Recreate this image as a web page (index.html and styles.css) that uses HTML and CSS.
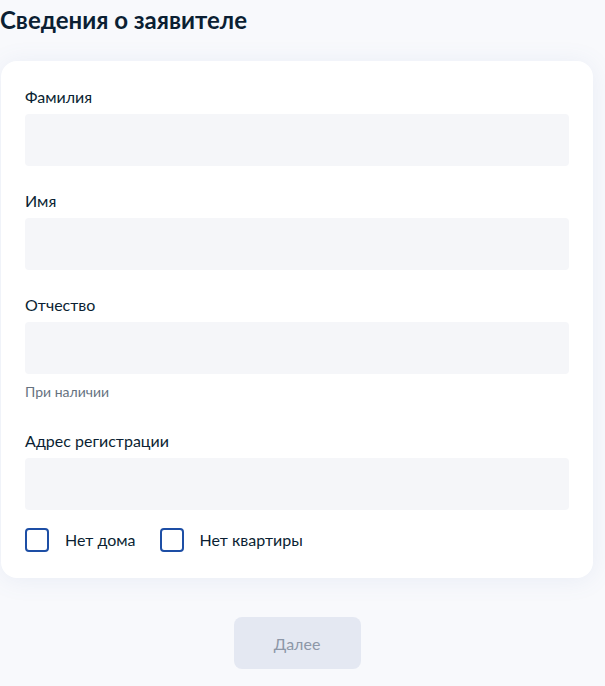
FILE: index.html
```html
<!DOCTYPE html>
<html lang="ru">
<head>
<meta charset="utf-8">
<link rel="stylesheet" href="styles.css">
</head>
<body>
<div class="page">
  <h1 class="title">Сведения о заявителе</h1>
  <div class="card">
    <div class="field">
      <label class="label">Фамилия</label>
      <div class="input"></div>
    </div>
    <div class="field">
      <label class="label">Имя</label>
      <div class="input"></div>
    </div>
    <div class="field">
      <label class="label">Отчество</label>
      <div class="input"></div>
      <div class="hint">При наличии</div>
    </div>
    <div class="field field-address">
      <label class="label">Адрес регистрации</label>
      <div class="input"></div>
    </div>
    <div class="checks">
      <label class="check"><span class="box"></span><span>Нет дома</span></label>
      <label class="check"><span class="box"></span><span>Нет квартиры</span></label>
    </div>
  </div>
  <div class="actions">
    <button class="btn" type="button">Далее</button>
  </div>
</div>
</body>
</html>
```
FILE: styles.css
```css
html, body {
  margin: 0;
  padding: 0;
  background: #f8f9fc;
  font-family: Lato, "Noto Sans", sans-serif;
  color: #0b1f33;
}
.page {
  width: 592px;
  margin-left: 1px;
}
.title {
  margin: 0;
  padding-top: 4px;
  font-size: 24px;
  line-height: 32px;
  font-weight: 700;
  color: #0b1f33;
  margin-left: -1px;
}
.card {
  margin-top: 25px;
  background: #ffffff;
  border-radius: 16px;
  box-shadow: 0 2px 24px rgba(100, 130, 190, 0.10);
  padding: 24px 24px 26px;
}
.field {
  display: flex;
  flex-direction: column;
  margin-bottom: 23px;
}
.label {
  font-size: 16px;
  line-height: 24px;
  margin-bottom: 5px;
  color: #0b1f33;
}
.input {
  height: 52px;
  background: #f5f6f9;
  border-radius: 4px;
}
.hint {
  margin-top: 8px;
  font-size: 14px;
  line-height: 20px;
  color: #66727f;
  margin-bottom: 4px;
}
.field-address {
  margin-bottom: 18px;
}
.checks {
  display: flex;
  gap: 24px;
  height: 24px;
  align-items: center;
}
.check {
  display: flex;
  align-items: center;
  gap: 16px;
  font-size: 16px;
  line-height: 24px;
  color: #0b1f33;
}
.box {
  width: 24px;
  height: 24px;
  box-sizing: border-box;
  border: 2px solid #1d4ea5;
  border-radius: 4px;
}
.actions {
  display: flex;
  justify-content: center;
  padding-top: 39px;
}
.btn {
  width: 127px;
  height: 52px;
  border: none;
  border-radius: 8px;
  background: #e4e8f2;
  color: #8d97a8;
  font-family: Lato, "Noto Sans", sans-serif;
  font-size: 16px;
}
```
